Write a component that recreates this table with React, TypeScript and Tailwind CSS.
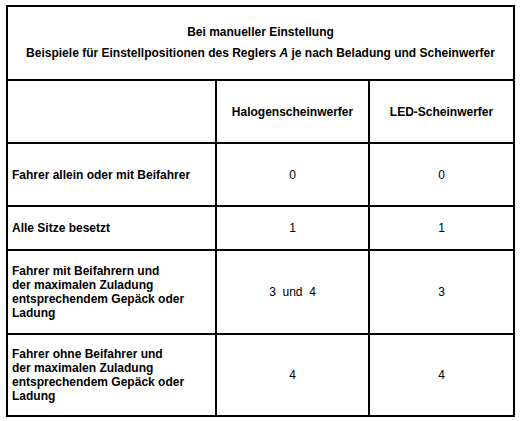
const rows = [
  { label: ["Fahrer allein oder mit Beifahrer"], halogen: "0", led: "0", h: "h-[63px]" },
  { label: ["Alle Sitze besetzt"], halogen: "1", led: "1", h: "h-[44px]" },
  {
    label: ["Fahrer mit Beifahrern und", "der maximalen Zuladung", "entsprechendem Gepäck oder", "Ladung"],
    halogen: "3  und  4",
    led: "3",
    h: "h-[84px]",
  },
  {
    label: ["Fahrer ohne Beifahrer und", "der maximalen Zuladung", "entsprechendem Gepäck oder", "Ladung"],
    halogen: "4",
    led: "4",
    h: "h-[82px]",
  },
];

export default function App() {
  return (
    <div className="min-h-[421px] w-[520px] bg-white pl-[6px] pt-[5px] font-['Liberation_Sans',Arial,sans-serif] text-[12px] text-black">
      <table className="w-[509px] table-fixed border-separate border-spacing-0 border-l-2 border-t-2 border-black">
        <colgroup>
          <col className="w-[209px]" />
          <col className="w-[153px]" />
          <col className="w-[145px]" />
        </colgroup>
        <tbody>
          {/* Kopfzeile */}
          <tr>
            <td colSpan={3} className="h-[74px] border-b-2 border-r-2 border-black p-0 text-center align-middle font-bold leading-[21px]">
              <div>Bei manueller Einstellung</div>
              <div>
                Beispiele für Einstellpositionen des Reglers <i>A</i> je nach Beladung und Scheinwerfer
              </div>
            </td>
          </tr>
          <tr>
            <td className="h-[63px] border-b-2 border-r-2 border-black p-0" />
            <td className="h-[63px] border-b-2 border-r-2 border-black p-0 text-center align-middle font-bold">
              Halogenscheinwerfer
            </td>
            <td className="h-[63px] border-b-2 border-r-2 border-black p-0 text-center align-middle font-bold">
              LED-Scheinwerfer
            </td>
          </tr>
          {rows.map((r, i) => (
            <tr key={i}>
              <td className={`${r.h} border-b-2 border-r-2 border-black p-0 pl-[4px] align-middle font-bold leading-[14px]`}>
                {r.label.map((l, j) => (
                  <div key={j}>{l}</div>
                ))}
              </td>
              <td className={`${r.h} whitespace-pre border-b-2 border-r-2 border-black p-0 text-center align-middle`}>
                {r.halogen}
              </td>
              <td className={`${r.h} border-b-2 border-r-2 border-black p-0 text-center align-middle`}>{r.led}</td>
            </tr>
          ))}
        </tbody>
      </table>
    </div>
  );
}
